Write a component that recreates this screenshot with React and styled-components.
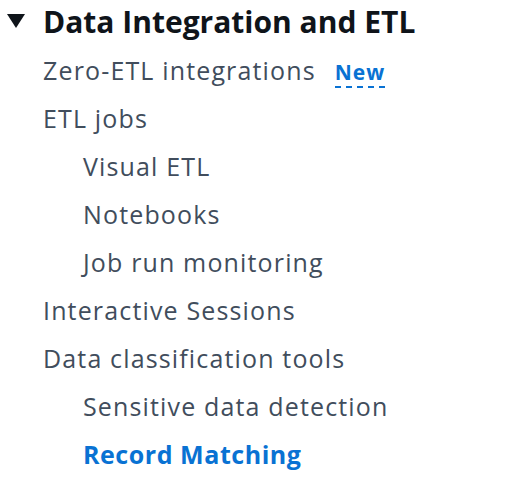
import React from 'react'
import styled, { createGlobalStyle } from 'styled-components'

const Global = createGlobalStyle`
body {
  margin: 0;
  background: #ffffff;
  font-family: "Open Sans", "Noto Sans", sans-serif;
}
`
const Section = styled.section`
  padding: 0 0 0 7px;
`
const Header = styled.div`
  display: flex;
  align-items: center;
  gap: 18px;
  height: 42px;
`
const Caret = styled.svg`
  width: 18px;
  height: 14px;
  flex-shrink: 0;
`
const Title = styled.h2`
  margin: 0;
  font-size: 30px;
  font-weight: 700;
  color: #0f141a;
`
const List = styled.ul`
  list-style: none;
  margin: 4px 0 0;
  padding: 0 0 0 36px;
`
const Item = styled.li`
  display: flex;
  align-items: center;
  gap: 19px;
  height: 48px;
  padding-left: ${p => (p.$level === 2 ? '40px' : '0')};
  font-size: 25px;
  letter-spacing: ${p => (p.$active ? '0.55px' : '1.15px')};
  color: ${p => (p.$active ? '#0972d3' : '#414d5c')};
  font-weight: ${p => (p.$active ? 700 : 400)};
`
const Badge = styled.span`
  font-size: 21px;
  font-weight: 700;
  letter-spacing: 1px;
  color: #0972d3;
  border-bottom: 2px dashed #0972d3;
  line-height: 28px;
  margin-top: 6px;
`

const items = [
  { label: 'Zero-ETL integrations', level: 1, badge: 'New' },
  { label: 'ETL jobs', level: 1 },
  { label: 'Visual ETL', level: 2 },
  { label: 'Notebooks', level: 2 },
  { label: 'Job run monitoring', level: 2 },
  { label: 'Interactive Sessions', level: 1 },
  { label: 'Data classification tools', level: 1 },
  { label: 'Sensitive data detection', level: 2 },
  { label: 'Record Matching', level: 2, active: true },
]

export default function App() {
  return (
    <Section>
      <Global />
      <Header>
        <Caret viewBox="0 0 18 14">
          <polygon points="0,0 18,0 9,14" fill="#0f141a" />
        </Caret>
        <Title>Data Integration and ETL</Title>
      </Header>
      <List>
        {items.map(it => (
          <Item key={it.label} $level={it.level} $active={it.active}>
            {it.label}
            {it.badge && <Badge>{it.badge}</Badge>}
          </Item>
        ))}
      </List>
    </Section>
  )
}
